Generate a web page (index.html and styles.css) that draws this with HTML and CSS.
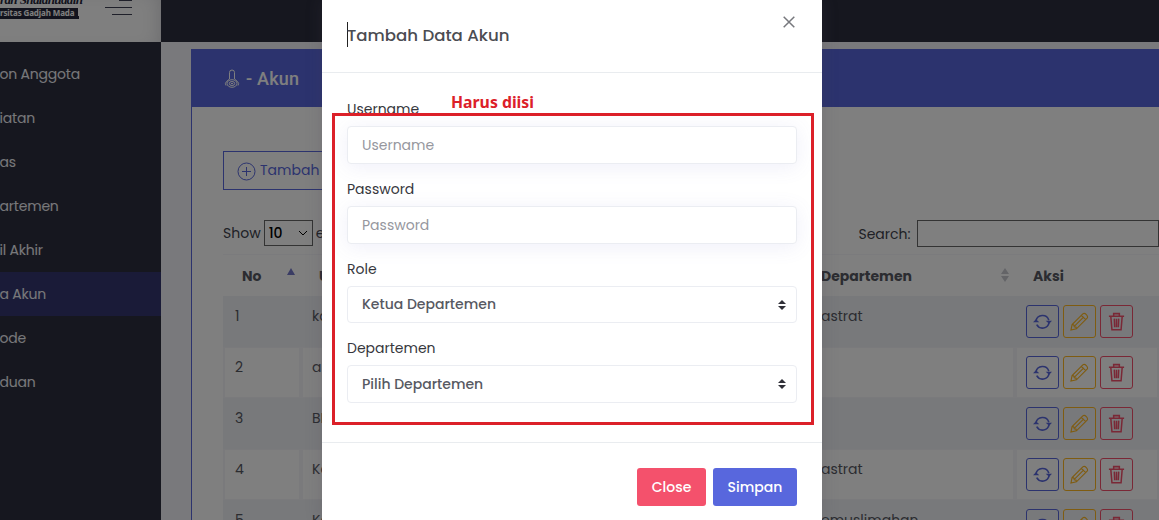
FILE: index.html
```html
<!DOCTYPE html>
<html lang="id">
<head>
<meta charset="utf-8">
<title>Tambah Data Akun</title>
<link rel="stylesheet" href="styles.css">
</head>
<body>
<svg class="defs" width="0" height="0">
  <symbol id="sync" viewBox="0 0 18 18"><path d="M2.800 8.500A6.300 6.300 0 0 1 15 7.800M15.200 10A6.300 6.300 0 0 1 3.500 12" fill="none" stroke="currentColor" stroke-width="1.500"/><path d="M0 9.600 2.800 6.800 6 9.600zM12 8.400 15.300 11.200 18 8.400z" fill="currentColor"/></symbol>
  <symbol id="pencil" viewBox="0 0 20 20"><path d="M1 19 2.200 13.200 13.500 2q1.600-1.500 3.700.7t.8 3.800L6.800 17.700zM2.200 13.200l1.800.5.5 1.800 1.800.4.5 1.800M12 3.500 16.500 8M5 14.700 14.500 5.200" fill="none" stroke="currentColor" stroke-width="1.200"/></symbol>
  <symbol id="trash" viewBox="0 0 18 20"><path d="M1 4.500h16M3 4.500 4.200 18.700h9.600L15 4.500M6 4V1.700h6V4M6.700 7l.4 9M9 7v9M11.300 7l-.4 9" fill="none" stroke="currentColor" stroke-width="1.600"/></symbol>
</svg>
<div class="page">
  <aside class="sidebar">
    <div class="brand">
      <div class="logo"><span class="script">ran Shalahuddin</span><span class="univ">rsitas Gadjah Mada</span></div>
      <div class="burger"><i></i><i></i><i></i></div>
    </div>
    <nav class="menu">
      <a>on Anggota</a><a>iatan</a><a>as</a><a>artemen</a><a>il Akhir</a><a class="active">a Akun</a><a>ode</a><a>duan</a>
    </nav>
  </aside>
  <main class="main">
    <div class="topbar"></div>
    <section class="portlet">
      <header class="portlet-head">
        <svg width="16" height="20" viewBox="0 0 16 20" fill="none" stroke="currentColor"><path d="M5.500 10V3.500Q5.500 1 8 1t2.500 2.500V10l3 2.500q2 2 .5 4M5.500 10l-3 2.500q-2 2-.5 4"/><ellipse cx="8" cy="14.500" rx="5" ry="3.800"/><ellipse cx="8" cy="14.500" rx="2.700" ry="2"/><path d="M7 14.500h2"/></svg>
        <span>- Akun</span>
      </header>
      <div class="portlet-body">
        <button class="add"><svg width="19" height="19" viewBox="0 0 19 19" fill="none" stroke="currentColor"><circle cx="9.500" cy="9.500" r="8.500"/><path d="M9.500 5v9M5 9.500h9"/></svg><span>Tambah</span></button>
        <div class="controls">
          <label class="show">Show <span class="length">10<svg width="10" height="6" viewBox="0 0 10 6" fill="none" stroke="currentColor"><path d="m1 1 4 4 4-4"/></svg></span> e</label>
          <label class="search">Search: <span class="search-box"></span></label>
        </div>
        <div class="table">
          <div class="row head"><div>No<i class="asc"></i></div><div>U</div><div>Departemen<svg class="sort" width="8" height="14" viewBox="0 0 8 14"><path d="M0 6 4 0l4 6zM0 8l4 6 4-6z" fill="currentColor"/></svg></div><div>Aksi</div></div>
          <div class="row odd"><div>1</div><div>ka</div><div>astrat</div><div class="acts"><b class="info"><svg><use href="#sync"/></svg></b><b class="warn"><svg><use href="#pencil"/></svg></b><b class="dang"><svg><use href="#trash"/></svg></b></div></div>
          <div class="row"><div>2</div><div>a</div><div></div><div class="acts"><b class="info"><svg><use href="#sync"/></svg></b><b class="warn"><svg><use href="#pencil"/></svg></b><b class="dang"><svg><use href="#trash"/></svg></b></div></div>
          <div class="row odd"><div>3</div><div>BI</div><div></div><div class="acts"><b class="info"><svg><use href="#sync"/></svg></b><b class="warn"><svg><use href="#pencil"/></svg></b><b class="dang"><svg><use href="#trash"/></svg></b></div></div>
          <div class="row"><div>4</div><div>Ka</div><div>astrat</div><div class="acts"><b class="info"><svg><use href="#sync"/></svg></b><b class="warn"><svg><use href="#pencil"/></svg></b><b class="dang"><svg><use href="#trash"/></svg></b></div></div>
          <div class="row odd"><div>5</div><div>Ka</div><div>emuslimahan</div><div class="acts"><b class="info"><svg><use href="#sync"/></svg></b><b class="warn"><svg><use href="#pencil"/></svg></b><b class="dang"><svg><use href="#trash"/></svg></b></div></div>
        </div>
      </div>
    </section>
  </main>
</div>
<div class="backdrop"></div>
<div class="modal">
  <header class="modal-head">
    <h5>Tambah Data Akun</h5>
    <svg class="close" width="12" height="12" viewBox="0 0 12 12" fill="none" stroke="currentColor" stroke-width="1.500"><path d="m.7.7 10.600 10.600M11.300.7.700 11.300"/></svg>
  </header>
  <div class="modal-body">
    <label>Username</label><div class="field shade">Username</div>
    <label>Password</label><div class="field shade">Password</div>
    <label>Role</label><div class="field select short"><span>Ketua Departemen</span><svg width="8" height="10" viewBox="0 0 8 10"><path d="M0 4 4 0l4 4zM0 6l4 4 4-4z" fill="currentColor"/></svg></div>
    <label>Departemen</label><div class="field select"><span>Pilih Departemen</span><svg width="8" height="10" viewBox="0 0 8 10"><path d="M0 4 4 0l4 4zM0 6l4 4 4-4z" fill="currentColor"/></svg></div>
  </div>
  <footer class="modal-foot"><button class="btn red">Close</button><button class="btn blue">Simpan</button></footer>
</div>
<div class="mark"></div>
<div class="note">Harus diisi</div>
</body>
</html>
```
FILE: styles.css
```css
* { box-sizing: border-box; }
body { margin: 0; width: 1159px; height: 520px; overflow: hidden; position: relative; font: 14px/20px Poppins, Inter, "Open Sans", sans-serif; color: #575962; background: #f2f3f8; }
button { font: inherit; }
.defs { position: absolute; }
.page { display: flex; height: 520px; overflow: hidden; }
.sidebar { width: 161px; flex: none; background: #2c2e3e; overflow: hidden; }
.brand { height: 42px; background: #fff; display: flex; justify-content: space-between; padding-right: 29px; overflow: hidden; box-shadow: inset -12px 0 20px -12px rgba(70, 70, 90, .25); }
.logo { width: 84px; color: #25273a; }
.script { display: block; height: 9px; width: 81px; font: italic bold 13px/16px "Liberation Serif", serif; letter-spacing: -.6px; white-space: nowrap; margin-top: -8px; margin-bottom: 7px; }
.univ { display: block; width: 78px; height: 11px; background: #25273a; color: #fff; font: bold 8px/10px "Noto Sans", sans-serif; letter-spacing: -.12px; white-space: nowrap; box-shadow: 5px 4px 0 -4px #25273a; }
.burger { width: 27px; display: flex; flex-direction: column; align-items: flex-end; gap: 6px; }
.burger i { height: 1px; width: 27px; background: #3f4155; }
.burger i:first-child { width: 13px; }
.burger i:last-child { width: 20px; }
.menu { padding-top: 10px; }
.menu a { display: block; height: 44px; line-height: 44px; color: #f0f0f5; font-weight: 400; font-size: 14px; letter-spacing: -.2px; white-space: nowrap; text-indent: -.5px; }
.menu .active { background: #343770; }
.main { flex: 1; min-width: 0; }
.topbar { height: 42px; background: #2c2e3e; }
.portlet { margin: 7px 0 0 30px; border-left: 1px solid #5867dd; background: #fff; height: 480px; }
.portlet-head { height: 58px; background: #5867dd; color: #fff; display: flex; align-items: center; gap: 6px; padding: 1px 0 0 32px; font: 500 18px/24px Roboto, sans-serif; letter-spacing: .2px; }
.portlet-body { padding: 44px 0 0 31px; }
.add { height: 39px; width: 170px; padding: 0 0 0 13px; border: 1px solid #5867dd; background: transparent; color: #5867dd; display: flex; align-items: center; gap: 4px; font-size: 14px; }
.add svg { margin-top: 2px; }
.add span { margin-top: -2px; }
.controls { display: flex; justify-content: space-between; height: 64px; padding-top: 30px; color: #40424c; }
.show, .search { display: flex; align-items: center; height: 26px; gap: 3px; }
.length { width: 49px; height: 26px; border: 1px solid #666; color: #000; display: flex; align-items: center; justify-content: space-between; padding: 0 4px; font-weight: 500; }
.search { height: 27px; gap: 6.500px; }
.search-box { width: 242px; height: 27px; border: 1px solid #666; }
.row { display: grid; grid-template-columns: 78px 506px 208px 144px; height: 51px; }
.row > div { padding: 9px 10px; border: solid #f4f5f8; border-width: 1px 2px; position: relative; }
.row > div:nth-child(2) { padding-left: 9px; }
.row > div:nth-child(3) { padding-left: 14px; border-left: 0; }
.row.odd { background: #f0f3f7; }
.row.odd > div { border-color: transparent; }
.row.head { height: 42px; font-weight: 700; }
.row.head > div { padding: 11px 18px; border: solid #f7f7fa; border-width: 1px 0 0; }
.row.head > div:nth-child(1) { padding-left: 19px; }
.row.head > div:nth-child(3) { padding-left: 14px; }
.asc { position: absolute; left: 64px; top: 13px; border: 4px solid transparent; border-bottom: 7px solid #7478c8; border-top: 0; }
.sort { position: absolute; right: 6px; top: 13px; color: #c8c9cf; }
.row > .acts { display: flex; gap: 4px; padding: 8px 0 0 9px; }
.acts b { width: 33px; height: 33px; border: 1px solid; border-radius: 3px; display: flex; align-items: center; justify-content: center; }
.acts svg { width: 19px; height: 19px; }
.info { color: #5867dd; } .warn { color: #ffb822; } .dang { color: #f4516c; }
.backdrop { position: absolute; inset: 0; background: rgba(0, 0, 0, .5); }
.modal { position: absolute; left: 322px; top: 0; width: 500px; height: 520px; background: #fff; box-shadow: 0 0 15px 1px rgba(69, 65, 78, .2); }
.modal-head { height: 73px; border-bottom: 1px solid #e9ecef; display: flex; justify-content: space-between; padding: 22px 27px 0 25px; }
.modal-head h5 { margin: 0; height: 25px; border-left: 1px solid #222; font-size: 16.600px; line-height: 27px; font-weight: 500; color: #4b4c52; text-indent: -1px; }
.close { margin-top: -6px; color: #77787d; }
.modal-body { height: 370px; padding: 26px 25px 0; border-bottom: 1px solid #e9ecef; }
.modal-body label { display: block; color: #36373d; height: 27px; line-height: 20px; }
.field { height: 38px; margin-bottom: 15px; border: 1px solid #ebedf2; border-radius: 4px; padding: 0 14px; line-height: 36px; color: #96979e; background: #fff; }
.shade { box-shadow: 0 3px 20px rgba(113, 106, 202, .11); }
.select { display: flex; justify-content: space-between; align-items: center; padding-right: 10px; color: #575962; font-weight: 500; }
.short { height: 37px; }
.select span { margin-top: -1px; }
.select svg { color: #303038; }
.modal-foot { display: flex; justify-content: flex-end; gap: 7px; padding: 25px 25px 0; }
.btn { height: 38px; border: 0; border-radius: 3px; color: #fff; padding: 0; font-weight: 500; }
.red { width: 69px; background: #f4516c; } .blue { width: 84px; background: #5867dd; }
.mark { position: absolute; left: 332px; top: 113px; width: 482px; height: 312px; border: 3px solid #dc2029; }
.note { position: absolute; left: 451px; top: 92px; color: #dc2029; font: bold 15.800px/20px "Noto Sans", sans-serif; }
```
